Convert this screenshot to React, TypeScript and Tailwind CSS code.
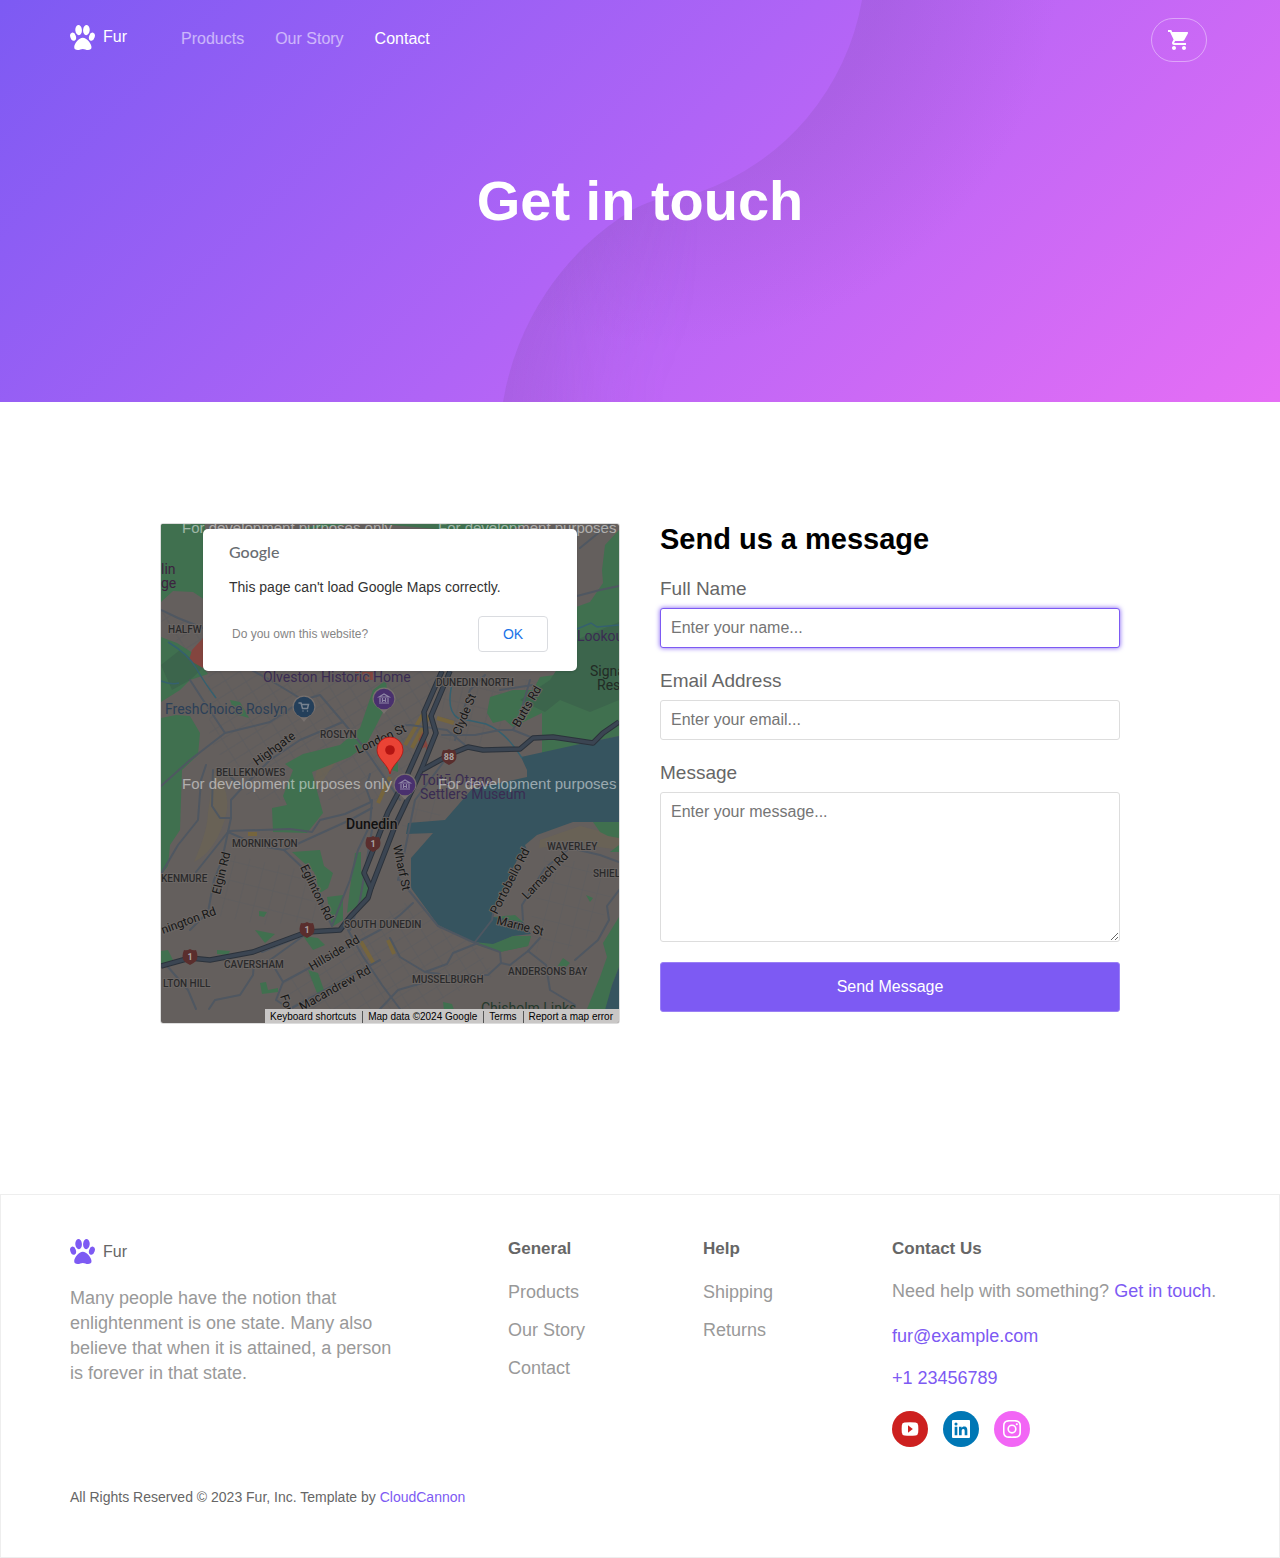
import type { ReactNode } from "react";
import { MdShoppingCart } from "react-icons/md";
import { BiLogoInstagram, BiLogoLinkedinSquare } from "react-icons/bi";

function Paw({ className }: { className: string }) {
  return (
    <svg viewBox="0 0 25 25" className={className} fill="currentColor" aria-hidden="true">
      <ellipse cx="8.6" cy="5.1" rx="3.3" ry="5.1" transform="rotate(-4 8.6 5.1)" />
      <ellipse cx="16.4" cy="5.1" rx="3.3" ry="5.1" transform="rotate(4 16.4 5.1)" />
      <ellipse cx="3.1" cy="11.7" rx="2.8" ry="4.2" transform="rotate(-18 3.1 11.7)" />
      <ellipse cx="21.9" cy="11.7" rx="2.8" ry="4.2" transform="rotate(18 21.9 11.7)" />
      <path d="M12.8 12.8c-4 0-8.3 5.8-8.6 9.2-.1 2.2 1.400 3 3.500 3 1.900 0 3.300-1.100 5.100-1.100s3.300 1.100 5.200 1.100c2.100 0 3.600-.8 3.500-3-.3-3.400-4.700-9.200-8.700-9.200z" />
    </svg>
  );
}

function Hero() {
  return (
    <div className="relative bg-[linear-gradient(135deg,#7d5af3_0%,#b064f6_49%,#e66ef5_100%)]">
      <svg
        className="absolute inset-0 h-full w-full"
        viewBox="0 0 1280 402"
        preserveAspectRatio="xMidYMid slice"
        aria-hidden="true"
      >
        <defs>
          <radialGradient id="upper" gradientUnits="userSpaceOnUse" cx="670" cy="-43" r="390">
            <stop offset="0.55" stopColor="#7a4a9a" stopOpacity="0.18" />
            <stop offset="1" stopColor="#7a4a9a" stopOpacity="0" />
          </radialGradient>
          <radialGradient id="lower" gradientUnits="userSpaceOnUse" cx="778" cy="420" r="275">
            <stop offset="0.4" stopColor="#7a4a9a" stopOpacity="0" />
            <stop offset="1" stopColor="#7a4a9a" stopOpacity="0.18" />
          </radialGradient>
          <linearGradient id="fade" gradientUnits="userSpaceOnUse" x1="550" y1="0" x2="700" y2="0">
            <stop offset="0" stopColor="#fff" />
            <stop offset="1" stopColor="#fff" stopOpacity="0" />
          </linearGradient>
          <mask id="fadeRight" maskUnits="userSpaceOnUse" x="0" y="0" width="1280" height="402">
            <rect width="1280" height="402" fill="url(#fade)" />
          </mask>
        </defs>
        <path d="M862 0A249 249 0 0 1 700 192Q662 194 632 210A278 278 0 0 0 503 402H1280V0z" fill="url(#upper)" />
        <path
          d="M700 192Q662 194 632 210A278 278 0 0 0 503 402H1056A278 278 0 0 0 700 192z"
          fill="url(#lower)"
          mask="url(#fadeRight)"
        />
      </svg>
      <header className="relative mx-auto flex w-full max-w-[1140px] items-center pt-[18px] pr-[3px] text-white max-xl:px-6">
        <a href="#" className="flex items-center gap-2 pb-[6px]">
          <Paw className="h-[25px] w-[25px]" />
          <span>Fur</span>
        </a>
        <nav className="ml-[54px] flex gap-[31px] pb-[3px] max-sm:ml-6 max-sm:gap-4">
          <a href="#" className="text-white/55">Products</a>
          <a href="#" className="text-white/55">Our Story</a>
          <a href="#" className="text-white">Contact</a>
        </nav>
        <button
          type="button"
          aria-label="Cart"
          className="ml-auto flex h-11 w-14 items-center justify-center rounded-[22px] border border-white/40"
        >
          <MdShoppingCart size={24} />
        </button>
      </header>
      <h1 className="relative px-6 pt-[107px] pb-[169px] text-center text-[56px] leading-[64px] font-bold text-white">
        Get in touch
      </h1>
    </div>
  );
}

const greens = [
  "161,524 205,524 205,600 193,592 173,591 161,602",
  "161,637 177,643 193,653 202,666 208,674 190,680 180,690 161,702",
  "161,718 176,715 190,716 200,733 198,755 182,770 180,830 170,845 168,866 161,875",
  "230,700 240,702 249,718 235,714",
  "373,690 386,680 388,702 378,722 366,745 350,757 312,772 323,813 307,833 273,832 272,808 287,805 283,796 293,770 285,764 303,754 340,745 360,728",
  "380,524 350,524 300,530 320,524 525,524 505,532 470,532",
  "619,530 605,545 602,570 603,583 590,602 576,607 576,672 540,677 533,690 513,690 490,697 487,713 493,723 505,720 513,727 542,713 542,757 580,744 619,736",
  "292,852 320,850 324,866 333,873 328,888 320,893 314,872",
  "355,853 361,852 361,870 371,890 367,900 347,913 350,888",
  "327,897 343,895 343,920 332,927",
  "303,936 318,938 325,945 313,950",
  "308,970 318,973 325,993 317,993",
  "255,930 275,934 265,943",
  "259,911 267,912 264,917 259,916",
  "260,983 266,982 268,990 278,988 278,992 262,994",
  "161,951 168,950 173,960 161,965",
  "217,950 230,951 228,955 217,954",
  "474,944 493,945 513,936 531,936 528,946 500,952",
  "593,822 619,822 619,838 608,836 600,832",
  "493,917 515,915 523,922 518,924 497,921",
  "619,917 603,943 607,957 600,977 587,1009 607,1009 612,985 619,967",
  "557,967 563,958 570,963 566,967",
  "586,895 593,898 590,902",
  "610,852 619,845 619,852",
  "443,1002 452,1004 454,1010 444,1010",
  "385,768 398,762 398,772",
];

const roads = [
  "161,610 178,618 203,628",
  "161,874 178,845 198,820 201,780 206,765",
  "213,770 212,806 220,818 231,818 231,800 242,788 224,770",
  "231,818 228,832 196,872",
  "228,832 222,860 214,880 208,912 190,930",
  "228,831 290,829 312,832 320,820 345,814 371,802 366,788 370,774",
  "228,832 260,846 284,850 305,870 318,898 332,926",
  "161,786 190,760 225,733 270,722 303,700 320,695 343,722 362,745 400,800",
  "303,700 270,680 248,668",
  "343,722 300,740 270,760 240,790",
  "284,850 350,820 372,808",
  "332,926 338,910 350,880 358,850 370,825 372,800",
  "225,733 203,700 190,680",
  "400,880 411,893 438,926 475,943 500,952 501,963 510,965 528,951 540,938",
  "501,963 488,975 450,975 398,990 380,1009",
  "425,972 447,964 453,953 478,943",
  "390,938 400,957 425,972 440,974",
  "348,930 362,955 382,985 400,1009",
  "262,952 306,934 270,960 283,982 380,930 400,915 413,903",
  "283,982 276,1000 290,1009",
  "290,1009 380,960",
  "168,967 188,990 196,1009",
  "209,1009 215,1000 240,995 253,975 254,962",
  "528,951 546,965 550,990 575,1005",
  "523,920 522,905 545,868 570,848 600,855 619,862",
  "619,890 607,906 609,920 598,940 575,960",
  "475,942 492,920 494,908",
  "442,735 475,735 500,730 513,730 520,715 530,680",
  "465,745 447,730 410,725 395,726",
  "513,730 533,738",
  "455,740 462,715 470,690 485,675",
  "500,690 533,685 534,694",
  "577,596 600,590 619,586",
  "580,548 602,530 610,524",
  "372,830 360,900 350,930",
  "398,880 405,850 415,800 445,760",
];

const highways = [
  "161,966 190,958 210,960 253,952 307,932 340,930 350,917 368,898 371,888 364,873 388,812 405,780 426,733 424,712 442,671",
  "371,888 395,826 412,790 422,768 436,733 431,716 450,671",
  "422,770 453,753 468,747 483,750 520,749 533,738 553,737 593,743 603,733 619,722",
];

const districts: [number, number, string][] = [
  [168, 633, "HALFW"],
  [320, 738, "ROSLYN"],
  [216, 776, "BELLEKNOWES"],
  [436, 686, "DUNEDIN NORTH"],
  [232, 847, "MORNINGTON"],
  [161, 882, "KENMURE"],
  [224, 968, "CAVERSHAM"],
  [163, 987, "LTON HILL"],
  [344, 928, "SOUTH DUNEDIN"],
  [412, 983, "MUSSELBURGH"],
  [508, 975, "ANDERSONS BAY"],
  [547, 850, "WAVERLEY"],
  [593, 877, "SHIEL"],
];

const streets: [number, number, number, string][] = [
  [257, 766, -36, "Highgate"],
  [358, 754, -25, "London St"],
  [460, 736, -68, "Clyde St"],
  [519, 728, -60, "Butts Rd"],
  [220, 895, -76, "Elgin Rd"],
  [300, 867, 64, "Eglinton Rd"],
  [393, 846, 78, "Wharf St"],
  [163, 934, -20, "nington Rd"],
  [312, 971, -31, "Hillside Rd"],
  [302, 1011, -29, "Macandrew Rd"],
  [280, 996, 72, "Forb"],
  [497, 915, -63, "Portobello Rd"],
  [527, 900, -46, "Larnach Rd"],
  [496, 924, 14, "Marne St"],
];

const shields: [number, number, string][] = [
  [449, 757, "88"],
  [373, 844, "1"],
  [307, 930, "1"],
  [190, 957, "1"],
];

function MapPin({ x, y, color, children }: { x: number; y: number; color: string; children: ReactNode }) {
  return (
    <g transform={`translate(${x} ${y})`}>
      <path d="M-11.500 0a11.500 11.500 0 1 1 23 0c0 7-8 9-11.500 15-3.500-6-11.500-8-11.500-15z" fill="#77706d" />
      <circle r="10.300" fill={color} />
      {children}
    </g>
  );
}

function Museum() {
  return (
    <path d="M-5-2 0-5 5-2zM-4-1v4M-1.500-1v4M1.500-1v4M4-1v4M-5 4H5M-1.500 1.500h3" fill="none" stroke="#8f86a6" strokeWidth="1.200" />
  );
}

function CityMap() {
  return (
    <svg
      className="absolute inset-0 h-full w-full"
      viewBox="161 524 458 499"
      preserveAspectRatio="xMidYMid slice"
      fontFamily="Roboto, sans-serif"
      role="img"
      aria-label="Map of Dunedin"
    >
      <defs>
        <pattern id="blocksA" width="17" height="12" patternUnits="userSpaceOnUse" patternTransform="rotate(-32)">
          <path d="M0 0H17M0 0V12" fill="none" stroke="#515a63" strokeWidth="1" />
        </pattern>
        <pattern id="blocksB" width="15" height="19" patternUnits="userSpaceOnUse" patternTransform="rotate(14)">
          <path d="M0 0H15M0 0V19" fill="none" stroke="#555b62" strokeWidth="1" />
        </pattern>
      </defs>
      <rect x="161" y="524" width="458" height="499" fill="#645f5d" />
      <g opacity="0.55">
        <path d="M208 671H440L400 800 250 800 210 740z" fill="url(#blocksA)" />
        <path d="M232 855 300 870 325 920 260 925 215 915z" fill="url(#blocksB)" />
        <path d="M345 935 410 900 475 945 495 975 420 1009H290L280 985z" fill="url(#blocksA)" />
        <path d="M445 675 540 680 485 745 440 740z" fill="url(#blocksB)" />
        <path d="M545 855 619 870 600 930 550 960 525 945z" fill="url(#blocksB)" />
        <path d="M161 610 203 630V665L161 625z" fill="url(#blocksA)" />
        <path d="M405 790 470 775 440 815 400 850z" fill="url(#blocksB)" />
      </g>
      <path d="M214 772q20 20 10 50t-30 40q14-32 14-50zM320 755l30-10-20 25-20 30zM540 840l40-14 39 10v14l-40-6-40 4z" fill="#6b6454" opacity="0.700" />
      {greens.map((p) => (
        <polygon key={p} points={p} fill="#40704f" />
      ))}
      <path d="M576 640 619 622V700L590 712 560 700 545 712 520 700 550 680z" fill="#3c654c" />
      <path d="M161 665 180 650 203 668 190 680 172 690z" fill="#3c654c" />
      <path
        d="M619 736 580 744 521 757 527 770V777L472 789 445 820 408 823 406 834 433 833 411 858V888L438 925 473 942 493 945 513 936 531 934 523 922 493 917 494 908 517 860 527 850 525 845 537 835 573 822H619z"
        fill="#36545f"
      />
      <path d="M619 967 612 985 605 1010H619z" fill="#36545f" />
      <path d="M474 942 493 944 513 936 531 936 528 946 500 952z" fill="#40704f" />
      <path d="M203 638 192 650 189 660 203 668zM355 672h18v8h-18zM418 735l4-5 6 16-8 3zM425 745l4 3-2 4z" fill="#84453f" />
      <path d="M405 745 425 711M412 748 429 716M437 718l17 5M378 803l12-26M360 940l14 24M388 940l6 14M248 834h9" fill="none" stroke="#796637" strokeWidth="4" opacity="0.850" />
      <path d="M168 642q20 12 28 26t20 30M161 681q10 4 18 2M453 680q-8 30 5 38l28 6q20 8 36 34M577 629l14-6 6 4 22-2" fill="none" stroke="#35606f" strokeWidth="1.500" />
      <g fill="none" stroke="#4f5761" strokeWidth="2" strokeLinejoin="round" strokeLinecap="round">
        {roads.map((p) => (
          <polyline key={p} points={p} />
        ))}
      </g>
      <g fill="none" strokeLinejoin="round">
        {highways.map((p) => (
          <polyline key={p} points={p} stroke="#2b323b" strokeWidth="5.500" />
        ))}
        {highways.map((p) => (
          <polyline key={p} points={p} stroke="#3b4552" strokeWidth="3.500" />
        ))}
      </g>

      <g fill="#2a2a2b" stroke="#6b6664" strokeWidth="2" paintOrder="stroke" fontSize="10" fontWeight="500">
        {districts.map(([x, y, name]) => (
          <text key={name} x={x} y={y}>{name}</text>
        ))}
      </g>
      <g fill="#161616" stroke="#6b6664" strokeWidth="2" paintOrder="stroke" fontSize="12">
        {streets.map(([x, y, angle, name]) => (
          <text key={name} transform={`translate(${x} ${y}) rotate(${angle})`}>{name}</text>
        ))}
      </g>
      <g stroke="#645f5d" strokeWidth="2" paintOrder="stroke" fontSize="14">
        <text x="263" y="682" fill="#3a2c52">Olveston Historic Home</text>
        <text x="165" y="714" fill="#2b4058">FreshChoice Roslyn</text>
        <text x="420" y="785" fill="#3a2c52" stroke="none">Toitū Otago</text>
        <text x="420" y="799" fill="#3a2c52" stroke="none">Settlers Museum</text>
        <text x="161" y="574" fill="#3d2340" stroke="none">lin</text>
        <text x="161" y="588" fill="#3d2340" stroke="none">ge</text>
        <text x="577" y="641" fill="#3a2c52" stroke="none">Lookou</text>
        <text x="590" y="676" fill="#222b25" stroke="none">Signa</text>
        <text x="597" y="690" fill="#222b25" stroke="none">Res</text>
        <text x="481" y="1013" fill="#24392c" stroke="none">Chisholm Links</text>
        <text x="346" y="829" fill="#111" fontWeight="500">Dunedin</text>
      </g>
      {shields.map(([x, y, n]) => (
        <g key={`${x}-${n}`} transform={`translate(${x} ${y})`}>
          <path d="M-6-7q3 1 6-1 3 2 6 1 3 7 0 11Q4 6 0 8-4 6-6 4q-3-4 0-11z" fill="#5a2e2d" />
          <text y="3" fontSize="9" fontWeight="700" textAnchor="middle" fill="#aaa4a2">{n}</text>
        </g>
      ))}
      <MapPin x={304} y={707} color="#243f5a">
        <path d="M-5-4h2l1.500 5.500h5l1-4h-6.500M-1 4v.1M3.500 4v.1" fill="none" stroke="#77828f" strokeWidth="1.500" strokeLinecap="round" />
      </MapPin>
      <MapPin x={384} y={699} color="#49306e">
        <Museum />
      </MapPin>
      <MapPin x={405} y={785} color="#49306e">
        <Museum />
      </MapPin>
      <path d="M390 774c-2-10-13-15-13-24a13 13 0 0 1 26 0c0 9-11 14-13 24z" fill="#ea4335" stroke="#b31412" strokeWidth="0.800" />
      <circle cx="390" cy="750" r="4.800" fill="#b31412" />
      <g fill="#fff" fillOpacity="0.500" fontFamily="Liberation Sans, sans-serif" fontSize="15">
        <text x="182" y="533">For development purposes only</text>
        <text x="438" y="533">For development purposes</text>
        <text x="182" y="789">For development purposes only</text>
        <text x="438" y="789">For development purposes</text>
      </g>
    </svg>
  );
}

function MapPanel() {
  return (
    <div className="relative h-[501px] overflow-hidden rounded-[3px] border border-[#dddddd]">
      <CityMap />
      <div
        role="dialog"
        aria-label="Google Maps error"
        className="relative mx-auto mt-[5px] w-[374px] max-w-full rounded-[5px] bg-white px-[26px] pt-[11px] pb-[19px] shadow"
      >
        <p className="font-[Lato] text-base leading-6 font-medium text-[#696d72]">Google</p>
        <p className="mt-[13px] text-sm text-[#333333]">This page can't load Google Maps correctly.</p>
        <div className="mt-[19px] flex items-center justify-between px-[3px]">
          <a href="#" className="text-xs text-[#858585]">Do you own this website?</a>
          <button type="button" className="h-9 w-[70px] rounded border border-[#dadce0] text-sm text-[#1a73e8]">
            OK
          </button>
        </div>
      </div>
      <div className="absolute right-0 bottom-0 flex items-center bg-[#c9c7c6] pt-[2px] text-[10px] leading-3 text-black">
        <button type="button" className="pr-[6px] pl-[5px]">Keyboard shortcuts</button>
        <span className="border-l border-[#555555] pr-[6px] pl-[5px]">Map data ©2024 Google</span>
        <a href="#" className="border-l border-[#555555] pr-[6px] pl-[5px]">Terms</a>
        <a href="#" className="border-l border-[#555555] pr-[6px] pl-[5px]">Report a map error</a>
      </div>
    </div>
  );
}

const fieldClass =
  "block w-full rounded-[3px] border border-[#dddddd] bg-white px-[10px] text-base text-black outline-none placeholder:text-[#757575] focus:border-[#7d5af3] focus:shadow-[0_0_5px_#7d5af3]";
const labelClass = "block pb-[7px] text-[19px] leading-6 text-[#666666]";

function ContactForm() {
  return (
    <div>
      <h2 className="text-[29px] leading-[33px] font-bold text-black">Send us a message</h2>
      <form className="mt-[21px] flex flex-col" onSubmit={(e) => e.preventDefault()}>
        <label htmlFor="name" className={labelClass}>Full Name</label>
        <input id="name" type="text" autoFocus placeholder="Enter your name..." className={`${fieldClass} mb-[21px] h-10`} />
        <label htmlFor="email" className={labelClass}>Email Address</label>
        <input id="email" type="email" placeholder="Enter your email..." className={`${fieldClass} mb-[21px] h-10`} />
        <label htmlFor="message" className={labelClass}>Message</label>
        <textarea
          id="message"
          placeholder="Enter your message..."
          className={`${fieldClass} mb-5 h-[150px] resize-y py-[7px]`}
        />
        <button type="submit" className="h-[50px] rounded-[3px] border border-[#9a7ff5] bg-[#7d5af3] text-base text-white">
          Send Message
        </button>
      </form>
    </div>
  );
}

function FooterLinks({ title, links }: { title: string; links: string[] }) {
  return (
    <div>
      <h3 className="text-[17px] leading-5 font-bold text-[#666666]">{title}</h3>
      <ul className="mt-[21px] flex flex-col gap-[13px] text-lg leading-[25px] text-[#999999]">
        {links.map((link) => (
          <li key={link}>
            <a href="#">{link}</a>
          </li>
        ))}
      </ul>
    </div>
  );
}

function Footer() {
  return (
    <footer className="border border-[#eeeeee]">
      <div className="mx-auto w-full max-w-[1140px] pt-11 pb-[50px] max-xl:px-6">
        <div className="grid gap-y-8 sm:grid-cols-2 lg:grid-cols-[minmax(0,438fr)_minmax(0,195fr)_minmax(0,189fr)_minmax(0,318fr)]">
          <div>
            <a href="#" className="flex items-center gap-2 text-[#666666]">
              <Paw className="h-[25px] w-[25px] text-[#7d5af3]" />
              <span>Fur</span>
            </a>
            <p className="mt-[22px] max-w-[330px] text-lg leading-[25px] text-[#999999]">
              Many people have the notion that enlightenment is one state. Many also believe that when it is attained, a
              person is forever in that state.
            </p>
          </div>
          <FooterLinks title="General" links={["Products", "Our Story", "Contact"]} />
          <FooterLinks title="Help" links={["Shipping", "Returns"]} />
          <div className="text-lg leading-[25px] text-[#999999]">
            <h3 className="text-[17px] leading-5 font-bold text-[#666666]">Contact Us</h3>
            <p className="mt-5 whitespace-nowrap">
              Need help with something? <a href="#" className="text-[#7d5af3]">Get in touch</a>.
            </p>
            <p className="mt-5"><a href="#" className="text-[#7d5af3]">fur@example.com</a></p>
            <p className="mt-[17px]"><a href="#" className="text-[#7d5af3]">+1 23456789</a></p>
            <div className="mt-5 flex gap-[15px] text-white">
              <a href="#" aria-label="YouTube" className="flex h-9 w-9 items-center justify-center rounded-full bg-[#cd201f]">
                <svg viewBox="0 0 18 14" className="h-[14px] w-[18px]" aria-hidden="true">
                  <path d="M3.500.6Q9 0 14.500.6 17 .8 17.200 3.500q.3 3.500 0 7-.2 2.700-2.700 2.900-5.500.6-11 0Q1 13.200.8 10.500q-.3-3.500 0-7Q1 .8 3.500.6z" fill="#fff" />
                  <path d="M7 3.300 11.800 7 7 10.700z" fill="#cd201f" />
                </svg>
              </a>
              <a href="#" aria-label="LinkedIn" className="flex h-9 w-9 items-center justify-center rounded-full bg-[#0077b5]">
                <BiLogoLinkedinSquare size={24} />
              </a>
              <a href="#" aria-label="Instagram" className="flex h-9 w-9 items-center justify-center rounded-full bg-[#f266f5]">
                <BiLogoInstagram size={24} />
              </a>
            </div>
          </div>
        </div>
        <p className="mt-10 text-sm text-[#666666]">
          All Rights Reserved © 2023 Fur, Inc. Template by <a href="#" className="text-[#7d5af3]">CloudCannon</a>
        </p>
      </div>
    </footer>
  );
}

export default function App() {
  return (
    <div className="min-h-screen bg-white font-['Liberation_Sans',Arial,sans-serif] text-base">
      <Hero />
      <main className="mx-auto grid w-full max-w-[960px] gap-10 pt-[121px] pb-[170px] max-lg:px-6 md:grid-cols-2">
        <MapPanel />
        <ContactForm />
      </main>
      <Footer />
    </div>
  );
}
